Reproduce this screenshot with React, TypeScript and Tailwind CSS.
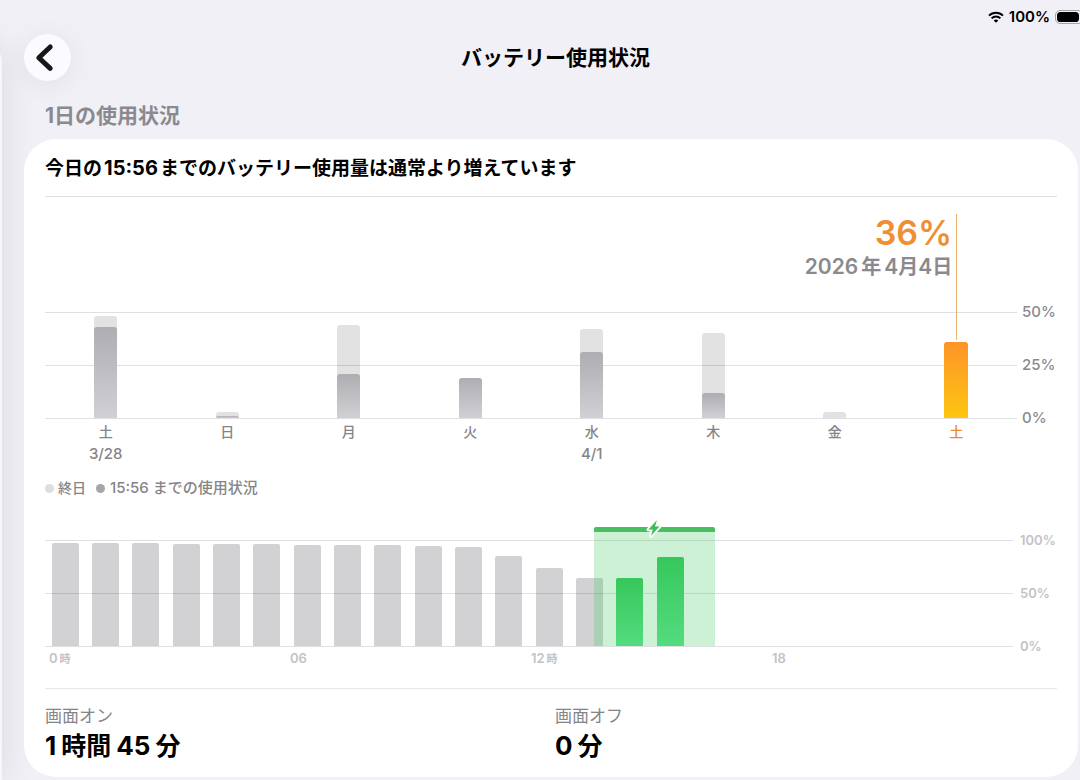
interface Day {
  label: string
  date?: string
  total: number
  partial: number
  selected?: boolean
}

const DAYS: Day[] = [
  { label: '土', date: '3/28', total: 48, partial: 43 },
  { label: '日', total: 3, partial: 1 },
  { label: '月', total: 44, partial: 21 },
  { label: '火', total: 19, partial: 19 },
  { label: '水', date: '4/1', total: 42, partial: 31 },
  { label: '木', total: 40, partial: 12 },
  { label: '金', total: 3, partial: 0 },
  { label: '土', total: 36, partial: 36, selected: true },
]

// battery level per hour, null once we are past "now"
const LEVELS: (number | null)[] = [
  97, 97, 97, 96, 96, 96, 95, 95, 95, 94, 93, 85, 74, 64, 64, 84,
  null, null, null, null, null, null, null, null,
]
const CHARGED_HOURS = [14, 15]
const CHARGING = { from: 13.6, to: 16.6 }

function StatusBar() {
  return (
    <div className="flex h-[34px] items-center justify-end gap-[5px] text-[15px] leading-5 font-semibold text-black">
      <svg width="16" height="12" viewBox="0 0 16 12" fill="none" stroke="currentColor" strokeWidth="2">
        <path d="M1 4.6C4.9.8 11.1.8 15 4.6" />
        <path d="M3.6 7.4c2.5-2.4 6.3-2.4 8.8 0" />
        <path d="M8 11.8 5.7 9.5c1.3-1.2 3.3-1.2 4.6 0z" fill="currentColor" stroke="none" />
      </svg>
      <span>100%</span>
      <svg width="25" height="14" viewBox="0 0 25 14">
        <rect x="0.5" y="0.5" width="27" height="13" rx="4.5" fill="none" stroke="#a3a3a8" />
        <rect x="2" y="2" width="22" height="10" rx="3.6" fill="#000" />
      </svg>
    </div>
  )
}

function GridLines() {
  return (
    <div className="absolute inset-x-0 top-0 -bottom-px flex flex-col justify-between">
      <div className="h-px bg-[#e0e0e2]" />
      <div className="h-px bg-[#e0e0e2]" />
      <div className="h-px bg-[#e0e0e2]" />
    </div>
  )
}

function DayBar({ day }: { day: Day }) {
  if (day.selected) {
    return (
      <div className="flex h-full w-6 flex-col justify-end">
        <div
          className="relative rounded-t-[3px] bg-linear-to-b from-[#fd9426] to-[#fdc50c]"
          style={{ height: `${day.total * 2}%` }}
        >
          <div className="absolute bottom-full left-1/2 mb-0.5 h-[126px] w-px bg-[#ebb26b]" />
        </div>
      </div>
    )
  }
  return (
    <div className="flex h-full w-[23px] flex-col justify-end">
      <div
        className="flex flex-col justify-end rounded-t-[3px] bg-black/[0.115]"
        style={{ height: `${day.total * 2}%` }}
      >
        <div
          className="rounded-t-[3px] bg-linear-to-b from-[#aeaeb2] to-[#d0d0d5]"
          style={{ height: `${(day.partial / day.total) * 100}%` }}
        />
      </div>
    </div>
  )
}

function WeekChart() {
  return (
    <div className="flex items-end pt-4">
      <div className="min-w-0 flex-1">
        <div className="h-[99px] w-[93.75%] pr-1 text-right">
          <div className="text-[34px] leading-10 font-semibold text-[#ef8f34]">36%</div>
          <div className="text-[21px] leading-7 font-semibold text-[#8a8a8e]">
            2026<span className="mx-[3px] text-xl">年</span>4<span className="text-xl">月</span>4
            <span className="text-xl">日</span>
          </div>
        </div>
        <div className="relative h-[106px]">
          <GridLines />
          <div className="relative grid h-full grid-cols-8 justify-items-center">
            {DAYS.map((d, i) => (
              <DayBar key={i} day={d} />
            ))}
          </div>
        </div>
        <div className="grid h-[46px] grid-cols-8 pt-[3px] text-center text-sm leading-[22px] font-medium text-[#858589]">
          {DAYS.map((d, i) => (
            <div key={i}>
              <div className={d.selected ? 'text-[#ea8a35]' : ''}>{d.label}</div>
              {d.date && <div className="text-[15px]">{d.date}</div>}
            </div>
          ))}
        </div>
      </div>
      <div className="mb-[35px] flex h-[128px] w-10 flex-col justify-between pl-[5px] text-[15px] leading-[22px] font-medium text-[#8a8a8e]">
        <span>50%</span>
        <span>25%</span>
        <span>0%</span>
      </div>
    </div>
  )
}

function Legend() {
  return (
    <div className="mt-[14px] flex h-5 items-center text-[15px] leading-5 font-medium text-[#858589]">
      <span className="mr-1 size-[9px] rounded-full bg-[#dededf]" />
      <span className="text-sm">終日</span>
      <span className="mr-[5px] ml-[10px] size-[9px] rounded-full bg-[#a5a5a8]" />
      <span>
        <span className="mr-1">15:56</span>までの使用状況
      </span>
    </div>
  )
}

function ChargingBand() {
  return (
    <div
      className="absolute -top-[13px] bottom-0"
      style={{
        left: `${(CHARGING.from / 24) * 100}%`,
        width: `${((CHARGING.to - CHARGING.from) / 24) * 100}%`,
      }}
    >
      <div className="h-[5px] rounded-t-[2px] bg-[#48be62]" />
      <div className="h-[114px] bg-[#34c759]/25" />
      <svg
        className="absolute -top-2 left-1/2 -ml-2"
        width="16"
        height="20"
        viewBox="0 0 16 20"
        strokeLinejoin="round"
      >
        <path
          d="M10.8 1.2 2.6 10.6h4.2L5 16.8 13.4 7.4H9z"
          fill="#3fbb5b"
          stroke="#f4fbf6"
          strokeWidth="4"
          paintOrder="stroke"
        />
      </svg>
    </div>
  )
}

function HourChart() {
  return (
    <div className="mt-[42px] flex items-start">
      <div className="min-w-0 flex-1">
        <div className="relative h-[106px]">
          <GridLines />
          <div className="relative grid h-full grid-cols-24 items-end justify-items-center">
            {LEVELS.map((level, i) => (
              <div
                key={i}
                className={
                  CHARGED_HOURS.includes(i)
                    ? 'relative z-10 w-[27px] rounded-t-[2px] bg-linear-to-b from-[#36c75b] to-[#53dc7f]'
                    : 'w-[27px] rounded-t-[2px] bg-[#1c1c28]/20'
                }
                style={{ height: `${level ?? 0}%` }}
              />
            ))}
            <ChargingBand />
          </div>
        </div>
        <div className="grid h-[22px] grid-cols-4 pt-0.5 pl-1 text-[13px] leading-5 font-semibold text-[#c3c3c6]">
          <span>
            0<span className="ml-0.5 text-[11px]">時</span>
          </span>
          <span>06</span>
          <span>
            12<span className="ml-0.5 text-[11px]">時</span>
          </span>
          <span>18</span>
        </div>
      </div>
      <div className="-mt-[10px] flex h-[126px] w-[44px] flex-col justify-between pl-[7px] text-[13px] leading-5 font-semibold text-[#c3c3c6]">
        <span>100%</span>
        <span>50%</span>
        <span>0%</span>
      </div>
    </div>
  )
}

export default function App() {
  return (
    <div className="flex min-h-screen overflow-hidden bg-[#f1f0f6] font-['Inter','Noto_Sans_CJK_JP',sans-serif]">
      <aside className="mt-[42px] -ml-[198px] w-[200px] shrink-0 rounded-tr-[20px] bg-[#f7f7fa] shadow-[0_0_36px_rgba(0,0,0,0.1)]" />
      <main className="relative min-w-0 flex-1 pr-0.5 pl-[22px]">
        <div className="-mr-0.5">
          <StatusBar />
        </div>
        <header className="flex items-center">
          <button
            aria-label="戻る"
            className="flex size-[47px] items-center justify-center rounded-full bg-[#fbfaff] shadow-[0_4px_28px_rgba(0,0,0,0.07)]"
          >
            <svg width="47" height="47" viewBox="0 0 47 47" fill="none" stroke="#17171a" strokeWidth="5" strokeLinecap="round" strokeLinejoin="round">
              <path d="M26.2 13 14.8 23.7 26.2 34.4" />
            </svg>
          </button>
          <h1 className="flex-1 pr-[38px] text-center text-[21px] leading-7 font-bold text-black">バッテリー使用状況</h1>
        </header>
        <h2 className="mt-[23px] mb-[11px] pl-[21px] text-[21px] leading-6 font-bold text-[#8a8a8e]">1日の使用状況</h2>
        <section className="rounded-[32px] bg-white px-[21px] pb-[15px]">
          <h3 className="flex h-[58px] items-center border-b border-[#e0e0e2] text-[19px] leading-6 font-bold text-black">
            <span>
              今日の<span className="mx-0.5 text-xl">15:56</span>までのバッテリー使用量は通常より増えています
            </span>
          </h3>
          <WeekChart />
          <Legend />
          <HourChart />
          <dl className="mt-5 grid grid-cols-2 gap-2 border-t border-[#e8e8ea] pt-[15px]">
            <div>
              <dt className="text-[17px] leading-6 text-[#858589]">画面オン</dt>
              <dd className="mt-0.5 text-[26px] leading-8 font-bold text-black">
                1<span className="mx-[5px] text-[25px]">時間</span>45<span className="ml-[5px] text-[25px]">分</span>
              </dd>
            </div>
            <div>
              <dt className="text-[17px] leading-6 text-[#858589]">画面オフ</dt>
              <dd className="mt-0.5 text-[26px] leading-8 font-bold text-black">
                0<span className="ml-[5px] text-[25px]">分</span>
              </dd>
            </div>
          </dl>
        </section>
      </main>
    </div>
  )
}
